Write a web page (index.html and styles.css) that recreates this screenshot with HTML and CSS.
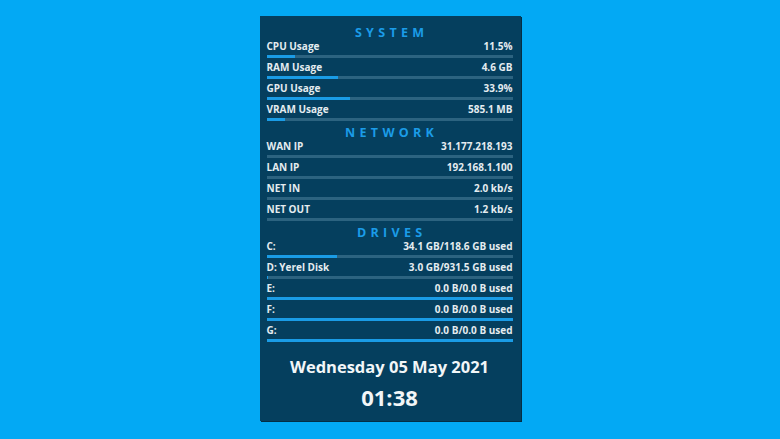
FILE: index.html
```html
<!DOCTYPE html>
<html>
<head>
<meta charset="utf-8">
<link rel="stylesheet" href="styles.css">
</head>
<body>
<div class="panel">
  <section class="section">
    <h2 class="title">SYSTEM</h2>
    <div class="row"><div class="line"><span>CPU Usage</span><span>11.5%</span></div><div class="track"><div class="fill" style="width:11.5%"></div></div></div>
    <div class="row"><div class="line"><span>RAM Usage</span><span>4.6 GB</span></div><div class="track"><div class="fill" style="width:29%"></div></div></div>
    <div class="row"><div class="line"><span>GPU Usage</span><span>33.9%</span></div><div class="track"><div class="fill" style="width:33.9%"></div></div></div>
    <div class="row"><div class="line"><span>VRAM Usage</span><span>585.1 MB</span></div><div class="track"><div class="fill" style="width:7.5%"></div></div></div>
  </section>
  <section class="section">
    <h2 class="title">NETWORK</h2>
    <div class="row"><div class="line"><span>WAN IP</span><span>31.177.218.193</span></div><div class="track"></div></div>
    <div class="row"><div class="line"><span>LAN IP</span><span>192.168.1.100</span></div><div class="track"></div></div>
    <div class="row"><div class="line"><span>NET IN</span><span>2.0 kb/s</span></div><div class="track"></div></div>
    <div class="row"><div class="line"><span>NET OUT</span><span>1.2 kb/s</span></div><div class="track"></div></div>
  </section>
  <section class="section">
    <h2 class="title">DRIVES</h2>
    <div class="row"><div class="line"><span>C:</span><span>34.1 GB/118.6 GB used</span></div><div class="track"><div class="fill" style="width:28.8%"></div></div></div>
    <div class="row"><div class="line"><span>D: Yerel Disk</span><span>3.0 GB/931.5 GB used</span></div><div class="track"><div class="fill" style="width:0.3%"></div></div></div>
    <div class="row"><div class="line"><span>E:</span><span>0.0 B/0.0 B used</span></div><div class="track"><div class="fill" style="width:100%"></div></div></div>
    <div class="row"><div class="line"><span>F:</span><span>0.0 B/0.0 B used</span></div><div class="track"><div class="fill" style="width:100%"></div></div></div>
    <div class="row"><div class="line"><span>G:</span><span>0.0 B/0.0 B used</span></div><div class="track"><div class="fill" style="width:100%"></div></div></div>
  </section>
  <div class="clock">
    <div class="date">Wednesday 05 May 2021</div>
    <div class="time">01:38</div>
  </div>
</div>
</body>
</html>
```
FILE: styles.css
```css
html, body {
  margin: 0;
  padding: 0;
}
body {
  background: #03a9f4;
  font-family: "Open Sans", "Noto Sans", sans-serif;
  color: #e4ecf0;
  height: 439px;
  overflow: hidden;
}
.panel {
  width: 261px;
  height: 405px;
  margin: 16px auto 0;
  background: #053f5e;
  box-shadow: 1px 1px 0 #032e45;
  box-sizing: border-box;
  padding: 10px 8px 0 7px;
  display: flex;
  flex-direction: column;
}
.section + .section {
  margin-top: 2px;
}
.title {
  margin: 0;
  font-size: 12.5px;
  line-height: 14px;
  height: 14px;
  font-weight: 700;
  letter-spacing: 4.3px;
  text-indent: 4.3px;
  text-align: center;
  color: #1b9ce8;
}
.row {
  padding-bottom: 3px;
}
.line {
  display: flex;
  justify-content: space-between;
  font-size: 10px;
  font-weight: 700;
  line-height: 12px;
  height: 12px;
  margin-bottom: 3px;
}
.track {
  height: 3px;
  background: #2c6380;
}
.fill {
  height: 3px;
  background: #1a9ce6;
}
.clock {
  text-align: center;
  font-weight: 700;
  color: #f2f6f8;
  padding-top: 11px;
}
.date {
  font-size: 16.5px;
  line-height: 22px;
}
.time {
  font-size: 22px;
  line-height: 28px;
  margin-top: 5px;
}
```
